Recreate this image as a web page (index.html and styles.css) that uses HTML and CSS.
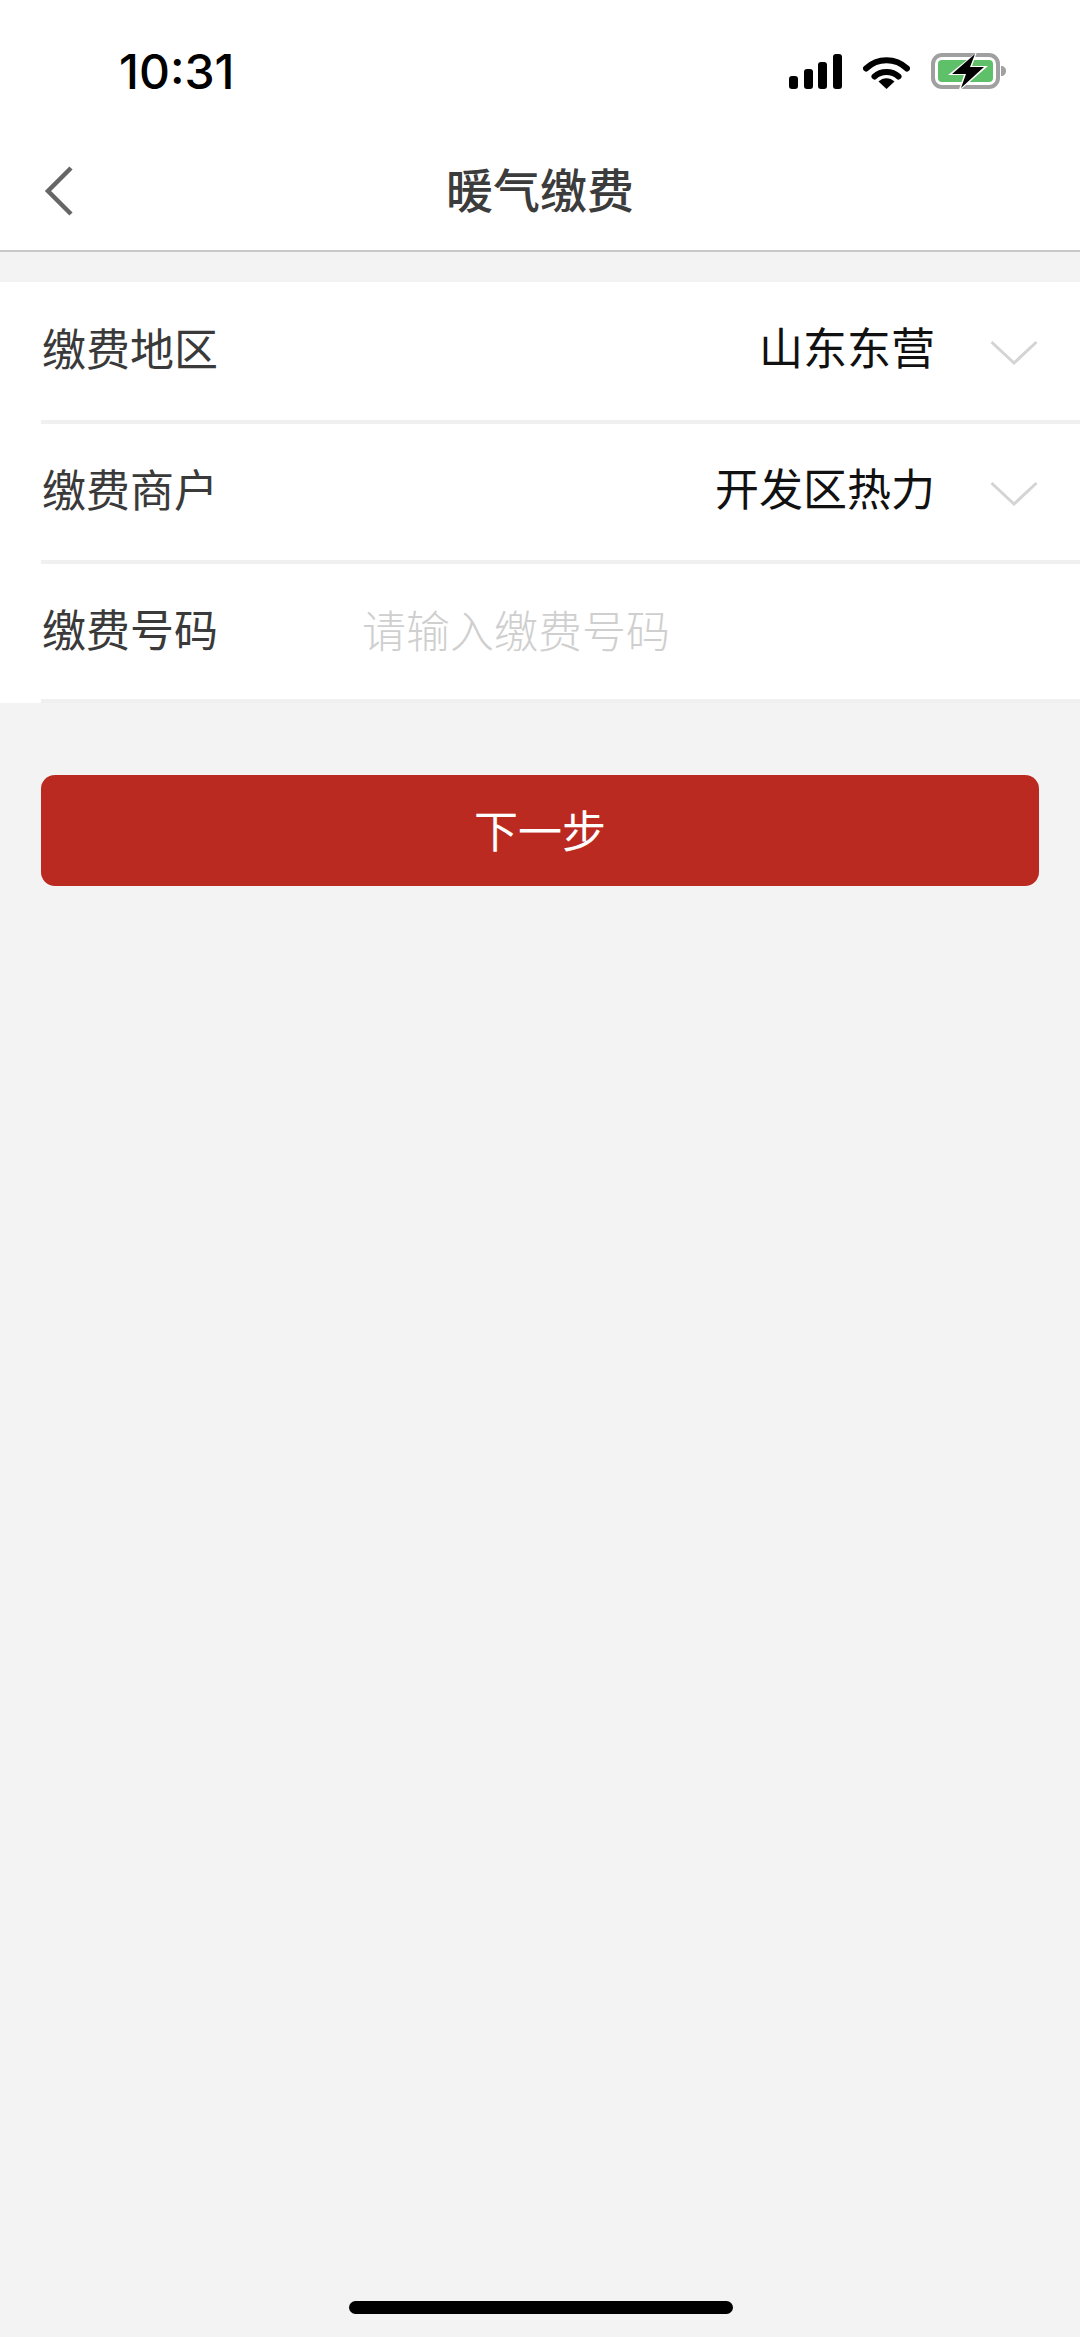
FILE: index.html
```html
<!DOCTYPE html>
<html lang="zh-CN">
<head>
<meta charset="utf-8">
<title>暖气缴费</title>
<link rel="stylesheet" href="styles.css">
</head>
<body>
<div class="screen">
  <header class="top">
    <div class="status">
      <span class="time">10:31</span>
      <div class="status-icons">
        <svg class="signal" width="53" height="35" viewBox="0 0 53 35"><rect x="0" y="22" width="9" height="13" rx="3"/><rect x="15" y="15" width="9" height="20" rx="3"/><rect x="29" y="8" width="9" height="27" rx="3"/><rect x="44" y="0" width="9" height="35" rx="3"/></svg>
        <svg class="wifi" width="47" height="35" viewBox="0 0 47 35"><path d="M3 14.500C14.500 3.500 32.500 3.500 44 14.500" fill="none" stroke="#000" stroke-width="6" stroke-linecap="round"/><path d="M11.500 22.500C18 16.500 29 16.500 35.500 22.500" fill="none" stroke="#000" stroke-width="6" stroke-linecap="round"/><path d="M15.500 27.500C20 23 27 23 31.500 27.500L23.500 35Z"/></svg>
        <svg class="battery" width="76" height="40" viewBox="0 0 76 40"><rect x="2" y="3" width="65" height="32" rx="9" fill="none" stroke="#a0a0a0" stroke-width="4"/><rect x="7" y="8" width="55" height="22" rx="4" fill="#5fc06a"/><path d="M70 14c3 0 5 2 5 5s-2 5-5 5z" fill="#a0a0a0"/><path d="M46 0L17 23H33L27 40L57 14H41Z" fill="#fff"/><path d="M44 2L21 22H35L30 36L53 15H39Z"/></svg>
      </div>
    </div>
    <nav class="nav">
      <svg class="back" width="30" height="50" viewBox="0 0 30 50"><path d="M27 2L4 25L27 48" fill="none" stroke="#666" stroke-width="4.500"/></svg>
      <h1 class="title">暖气缴费</h1>
    </nav>
  </header>

  <main class="content">
    <section class="form">
      <div class="row row-first">
        <span class="label">缴费地区</span>
        <span class="value">山东东营</span>
        <svg class="chevron" width="48" height="26" viewBox="0 0 48 26"><path d="M1.500 2L24 23L46.500 2" fill="none" stroke="#d4d4d4" stroke-width="3"/></svg>
      </div>
      <div class="row">
        <span class="label">缴费商户</span>
        <span class="value">开发区热力</span>
        <svg class="chevron" width="48" height="26" viewBox="0 0 48 26"><path d="M1.500 2L24 23L46.500 2" fill="none" stroke="#d4d4d4" stroke-width="3"/></svg>
      </div>
      <div class="row row-last">
        <span class="label">缴费号码</span>
        <span class="placeholder">请输入缴费号码</span>
      </div>
    </section>
    <button class="next" type="button">下一步</button>
  </main>
  <div class="home-bar"></div>
</div>
</body>
</html>
```

FILE: styles.css
```css
* { box-sizing: border-box; margin: 0; padding: 0; }
html, body { width: 1080px; height: 2337px; overflow: hidden; }
body { font-family: "Noto Sans CJK SC", "Noto Sans", sans-serif; background: #f4f3f4; }
.screen { position: relative; width: 1080px; height: 2337px; display: flex; flex-direction: column; }

.top { background: #fff; height: 252px; border-bottom: 2px solid #c8c8c8; }
.status { height: 144px; padding: 46px 73px 0 119px; display: flex; justify-content: space-between; align-items: flex-start; }
.time { font-family: Inter, "Liberation Sans", sans-serif; font-size: 48px; line-height: 52px; font-weight: 500; color: #000; }
.status-icons { display: flex; align-items: flex-start; padding-top: 8px; }
.wifi { margin-left: 21px; }
.battery { margin-left: 21px; margin-top: -2px; }

.nav { height: 106px; position: relative; display: flex; align-items: flex-start; justify-content: center; }
.back { position: absolute; left: 44px; top: 22px; }
.title { font-size: 47px; line-height: 60px; font-weight: 500; color: #3c3c3c; margin-top: 14px; }

.content { flex: 1; padding-top: 30px; display: flex; flex-direction: column; }
.form { background: #fff; }
.row { height: 140px; margin-left: 41px; padding: 0 41px 10px 1px; display: flex; align-items: center; border-bottom: 4px solid #f0f0f0; font-size: 44px; line-height: 60px; }
.row-first { height: 142px; }
.row-last { height: 139px; }
.label { width: 320px; color: #3a3a3a; flex: none; margin-top: 2px; }
.value { flex: 1; text-align: right; color: #111; }
.chevron { flex: none; margin: 14px 1px 0 55px; }
.placeholder { color: #cfcfcf; font-weight: 300; margin-top: 4px; }

.next { display: block; margin: 72px 41px 0; padding-bottom: 3px; width: 998px; height: 111px; border: 0; border-radius: 14px; background: #bb2a20; color: #fff; font-family: inherit; font-size: 44px; font-weight: 400; }

.home-bar { position: absolute; left: 349px; top: 2301px; width: 384px; height: 13px; border-radius: 7px; background: #000; }
```
